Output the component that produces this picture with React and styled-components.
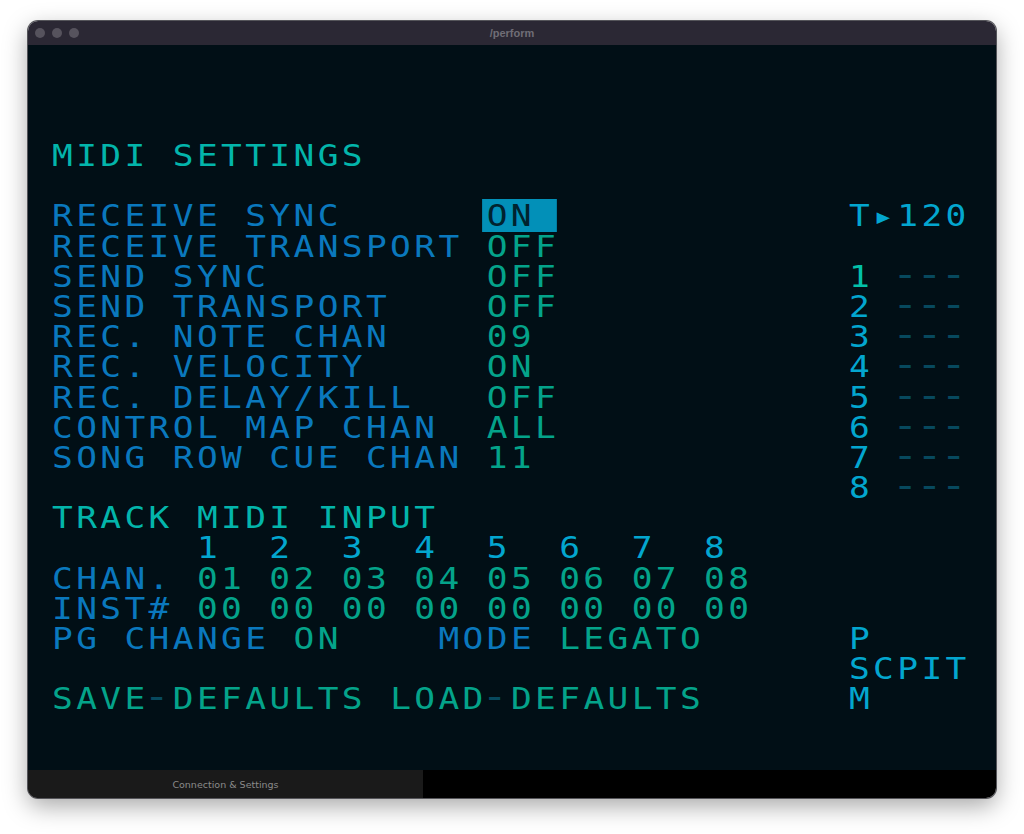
import React from "react";
import styled, { createGlobalStyle } from "styled-components";

// the pixel font is wider than any installed mono, so the text block is stretched
const STRETCH = 1.15;
const CELL = 24.15 / STRETCH;

const GlobalStyle = createGlobalStyle`
  html, body {
    margin: 0;
    background: #ffffff;
  }
`;

const Page = styled.div`
  width: 1024px;
  height: 834px;
  padding: 21px 28px 36px;
  box-sizing: border-box;
  overflow: hidden;
`;

const Window = styled.div`
  display: flex;
  flex-direction: column;
  height: 777px;
  border-radius: 10px;
  overflow: hidden;
  box-shadow: 0 0 0 1px #55555a, 0 8px 24px rgba(0, 0, 0, 0.35);
`;

const TitleBar = styled.div`
  position: relative;
  display: flex;
  align-items: center;
  justify-content: center;
  height: 24px;
  background: #2b2834;
  flex: none;
`;

const Lights = styled.div`
  position: absolute;
  left: 7px;
  top: 7px;
  display: flex;
  gap: 7px;
`;

const Light = styled.span`
  width: 10px;
  height: 10px;
  border-radius: 50%;
  background: #56535d;
`;

const Title = styled.span`
  font: bold 11px "Liberation Sans", sans-serif;
  color: #6f6d76;
`;

const Screen = styled.div`
  flex: 1;
  isolation: isolate;
  background: #010f16;
  padding: 96px 0 0 23.5px;
`;

const Terminal = styled.div`
  transform: scaleX(${STRETCH});
  transform-origin: 0 0;
`;

const Row = styled.div`
  display: grid;
  grid-template-columns: ${18 * CELL}px ${15 * CELL}px auto;
  height: 30.2px;
  line-height: 30.2px;
  font-family: "DejaVu Sans Mono", monospace;
  font-size: 30px;
  letter-spacing: ${CELL - 18.06}px;
  white-space: pre;
`;

const toneColors = {
  heading: "#03b5ab",
  label: "#0a78bd",
  value: "#04a38a",
  accent: "#03a6cf",
  active: "#03c0a8",
  dim: "#07495e",
};

const Txt = styled.span`
  color: ${(p) => toneColors[p.$tone]};
`;

const Wide = styled.span`
  grid-column: 1 / 3;
`;

// bigger hyphen, same advance as the other cells, pulled to the left of its cell
const Dash = styled.span`
  color: ${toneColors.dim};
  font-size: 38px;
  line-height: 0;
  letter-spacing: ${CELL - 38 * 0.602}px;
  margin: 0 4.5px 0 -4.5px;
`;

const Selected = styled.span`
  position: relative;
  color: #01232f;

  &::before {
    content: "";
    position: absolute;
    z-index: -1;
    left: ${-5 / STRETCH}px;
    top: 1px;
    width: ${75.5 / STRETCH}px;
    height: 33px;
    background: #0290b8;
  }
`;

const Footer = styled.div`
  display: flex;
  height: 28px;
  flex: none;
  background: #000000;
`;

const Tab = styled.div`
  display: flex;
  align-items: center;
  justify-content: center;
  width: 395px;
  background: #1a1a1a;
  font: 9.5px "DejaVu Sans", sans-serif;
  color: #8a8a8a;
`;

const settings = [
  ["RECEIVE SYNC", "ON"],
  ["RECEIVE TRANSPORT", "OFF"],
  ["SEND SYNC", "OFF"],
  ["SEND TRANSPORT", "OFF"],
  ["REC. NOTE CHAN", "09"],
  ["REC. VELOCITY", "ON"],
  ["REC. DELAY/KILL", "OFF"],
  ["CONTROL MAP CHAN", "ALL"],
  ["SONG ROW CUE CHAN", "11"],
];

const TrackSlot = ({ n }) => (
  <span>
    <Txt $tone={n === 1 ? "active" : "accent"}>{n}</Txt>
    {" "}
    <Dash>---</Dash>
  </span>
);

const sideFor = (i) => {
  if (i === 0) return <Txt $tone="accent">T▸120</Txt>;
  if (i === 1) return <span />;
  return <TrackSlot n={i - 1} />;
};

export default function App() {
  return (
    <Page>
      <GlobalStyle />
      <Window>
        <TitleBar>
          <Lights>
            <Light />
            <Light />
            <Light />
          </Lights>
          <Title>/perform</Title>
        </TitleBar>
        <Screen>
          <Terminal>
            <Row>
              <Wide>
                <Txt $tone="heading">MIDI SETTINGS</Txt>
              </Wide>
            </Row>
            <Row />
            {settings.map(([label, value], i) => (
              <Row key={label}>
                <Txt $tone="label">{label}</Txt>
                {i === 0 ? (
                  <span>
                    <Selected>{value}</Selected>
                  </span>
                ) : (
                  <Txt $tone="value">{value}</Txt>
                )}
                {sideFor(i)}
              </Row>
            ))}
            <Row>
              <span />
              <span />
              <TrackSlot n={8} />
            </Row>
            <Row>
              <Wide>
                <Txt $tone="heading">TRACK MIDI INPUT</Txt>
              </Wide>
            </Row>
            <Row>
              <Wide>
                <Txt $tone="accent">{"      1  2  3  4  5  6  7  8"}</Txt>
              </Wide>
            </Row>
            <Row>
              <Wide>
                <Txt $tone="label">{"CHAN. "}</Txt>
                <Txt $tone="value">01 02 03 04 05 06 07 08</Txt>
              </Wide>
            </Row>
            <Row>
              <Wide>
                <Txt $tone="label">{"INST# "}</Txt>
                <Txt $tone="value">00 00 00 00 00 00 00 00</Txt>
              </Wide>
            </Row>
            <Row>
              <Wide>
                <Txt $tone="label">{"PG CHANGE "}</Txt>
                <Txt $tone="value">ON</Txt>
                <Txt $tone="label">{"    MODE "}</Txt>
                <Txt $tone="value">LEGATO</Txt>
              </Wide>
              <Txt $tone="accent">P</Txt>
            </Row>
            <Row>
              <span />
              <span />
              <Txt $tone="accent">SCPIT</Txt>
            </Row>
            <Row>
              <Wide>
                <Txt $tone="value">SAVE</Txt>
                <Dash>-</Dash>
                <Txt $tone="value">DEFAULTS LOAD</Txt>
                <Dash>-</Dash>
                <Txt $tone="value">DEFAULTS</Txt>
              </Wide>
              <Txt $tone="accent">M</Txt>
            </Row>
          </Terminal>
        </Screen>
        <Footer>
          <Tab>Connection &amp; Settings</Tab>
        </Footer>
      </Window>
    </Page>
  );
}
